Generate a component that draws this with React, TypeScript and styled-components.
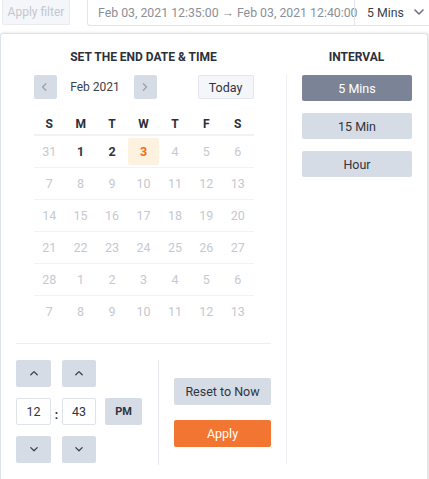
import styled, { createGlobalStyle } from 'styled-components';

const GlobalStyle = createGlobalStyle`
	html, body {
		margin: 0;
		padding: 0;
		background: #ffffff;
		font-family: Roboto, 'Noto Sans', Arial, sans-serif;
		overflow: hidden;
	}
	* {
		box-sizing: border-box;
	}
`;

const Page = styled.div`
	width: 429px;
	height: 479px;
	overflow: hidden;
`;

const TopBar = styled.div`
	display: flex;
	align-items: stretch;
	height: 26px;
`;

const FilterButton = styled.button`
	margin-left: 2px;
	width: 68px;
	height: 25px;
	padding: 0;
	background: #f4f6f9;
	border: 1px solid #e8ebf0;
	border-top: 0;
	border-radius: 0 0 2px 2px;
	color: #c3c7ce;
	font-family: inherit;
	font-size: 12px;
`;

const RangeBox = styled.div`
	margin-left: 17px;
	flex: 1;
	display: flex;
	align-items: center;
	height: 26px;
	border-left: 1px solid #e2e6ec;
	border-bottom: 1px solid #e2e6ec;
	border-radius: 0 0 0 3px;
`;

const RangeText = styled.span`
	padding-left: 10px;
	width: 266px;
	flex-shrink: 0;
	color: #8a8f99;
	font-size: 12.3px;
	white-space: nowrap;
`;

const IntervalSelect = styled.div`
	flex: 1;
	height: 100%;
	display: flex;
	align-items: center;
	gap: 10px;
	padding-left: 12px;
	border-left: 1px solid #e2e6ec;
	color: #3b404a;
	font-size: 12.3px;
`;

const Popup = styled.div`
	margin-top: 7px;
	width: 428px;
	height: 460px;
	border: 1px solid #dde2ea;
	border-bottom: 0;
	border-radius: 3px 3px 0 0;
	box-shadow: 1px 0 3px rgba(60, 70, 90, 0.18);
	display: grid;
	grid-template-columns: 285px 1fr;
	grid-template-rows: 41px auto;
`;

const Title = styled.h3`
	margin: 0;
	padding-top: 16px;
	text-align: center;
	font-size: 12px;
	font-weight: 700;
	color: #2b303a;
	line-height: 14px;
`;

const LeftPane = styled.div`
	padding: 0 15px;
`;

const Calendar = styled.div`
	width: 220px;
	margin: 0 auto;
`;

const NavRow = styled.div`
	display: flex;
	align-items: center;
	height: 24px;
`;

const NavButton = styled.button`
	width: 23px;
	height: 24px;
	padding: 0;
	border: 0;
	border-radius: 2px;
	background: #d6dce5;
	display: flex;
	align-items: center;
	justify-content: center;
`;

const MonthLabel = styled.span`
	width: 77px;
	text-align: center;
	font-size: 12px;
	color: #3b404a;
`;

const TodayButton = styled.button`
	margin-left: auto;
	width: 56px;
	height: 24px;
	padding: 0;
	background: #f4f6f9;
	border: 1px solid #e3e7ed;
	border-radius: 2px;
	font-family: inherit;
	font-size: 12.5px;
	color: #2f343d;
`;

const Week = styled.div<{ $head?: boolean }>`
	display: grid;
	grid-template-columns: repeat(7, 1fr);
	height: ${(p) => (p.$head ? '22px' : '32px')};
	margin-top: ${(p) => (p.$head ? '14px' : '0')};
	border-bottom: ${(p) => (p.$head ? '1px solid #f0f2f5' : '0')};
	& + & {
		border-top: 1px solid #f0f2f5;
	}
`;

const DayName = styled.span`
	display: flex;
	align-items: center;
	justify-content: center;
	font-size: 12px;
	font-weight: 700;
	color: #2b303a;
`;

const Day = styled.span<{ $tone: 'muted' | 'active' | 'selected' }>`
	margin: 2px 0;
	display: flex;
	align-items: center;
	justify-content: center;
	border-radius: 2px;
	font-size: 12.5px;
	font-weight: ${(p) => (p.$tone === 'muted' ? 400 : 700)};
	color: ${(p) =>
		p.$tone === 'muted' ? '#c5c9d0' : p.$tone === 'selected' ? '#f26c1f' : '#2f343d'};
	background: ${(p) => (p.$tone === 'selected' ? '#fdf2df' : 'transparent')};
`;

const Rule = styled.div`
	margin-top: 16px;
	height: 1px;
	background: #eceff3;
`;

const TimeRow = styled.div`
	margin-top: 16px;
	display: flex;
	height: 105px;
`;

const Spinner = styled.div`
	display: grid;
	grid-template-columns: 35px 11px 34px 9px 37px;
	grid-template-rows: 27px 27px 27px;
	row-gap: 11px;
	align-items: center;
	padding-right: 16px;
	border-right: 1px solid #e6e9ee;
`;

const StepButton = styled.button`
	height: 27px;
	padding: 0;
	border: 0;
	border-radius: 2px;
	background: #d6dce5;
	display: flex;
	align-items: center;
	justify-content: center;
`;

const TimeInput = styled.input`
	width: 100%;
	height: 27px;
	border: 1px solid #dfe3ea;
	border-radius: 2px;
	text-align: center;
	font-family: inherit;
	font-size: 12.5px;
	color: #2f343d;
	padding: 0;
	outline: none;
`;

const Colon = styled.span`
	text-align: center;
	font-size: 12px;
	font-weight: 700;
	color: #2f343d;
	padding-top: 6px;
`;

const MeridiemButton = styled.button`
	height: 27px;
	padding: 0;
	border: 0;
	border-radius: 2px;
	background: #d6dce5;
	font-family: inherit;
	font-size: 11px;
	font-weight: 700;
	color: #2f343d;
`;

const Actions = styled.div`
	flex: 1;
	padding-left: 15px;
	display: flex;
	flex-direction: column;
	justify-content: center;
	gap: 15px;
`;

const ActionButton = styled.button<{ $primary?: boolean }>`
	height: 27px;
	padding: 0;
	border: 0;
	border-radius: 2px;
	background: ${(p) => (p.$primary ? '#f27632' : '#d6dce5')};
	color: ${(p) => (p.$primary ? '#ffffff' : '#2f343d')};
	font-family: inherit;
	font-size: 12.5px;
`;

const IntervalPane = styled.div`
	height: 389px;
	border-left: 1px solid #eceff3;
	padding: 0 15px 0 15px;
	display: flex;
	flex-direction: column;
	gap: 12px;
`;

const IntervalButton = styled.button<{ $active?: boolean }>`
	height: 26px;
	padding: 0;
	border: 0;
	border-radius: 2px;
	background: ${(p) => (p.$active ? '#7b8497' : '#d6dce5')};
	color: ${(p) => (p.$active ? '#ffffff' : '#2f343d')};
	font-family: inherit;
	font-size: 12.5px;
`;

const Chevron = ({ dir, color = '#3b404a', size = 8 }: { dir: 'up' | 'down' | 'left' | 'right'; color?: string; size?: number }) => {
	const d = {
		up: 'M1 6 L5 2 L9 6',
		down: 'M1 2 L5 6 L9 2',
		left: 'M6 1 L2 5 L6 9',
		right: 'M3 1 L7 5 L3 9',
	}[dir];
	return (
		<svg width={size} height={size} viewBox="0 0 10 10" fill="none">
			<path d={d} stroke={color} strokeWidth={1.6} strokeLinecap="round" strokeLinejoin="round" />
		</svg>
	);
};

const weekdays = ['S', 'M', 'T', 'W', 'T', 'F', 'S'];

const weeks: number[][] = [
	[31, 1, 2, 3, 4, 5, 6],
	[7, 8, 9, 10, 11, 12, 13],
	[14, 15, 16, 17, 18, 19, 20],
	[21, 22, 23, 24, 25, 26, 27],
	[28, 1, 2, 3, 4, 5, 6],
	[7, 8, 9, 10, 11, 12, 13],
];

function toneOf(row: number, col: number): 'muted' | 'active' | 'selected' {
	if (row === 0 && col === 3) return 'selected';
	if (row === 0 && (col === 1 || col === 2)) return 'active';
	return 'muted';
}

export default function App() {
	return (
		<Page>
			<GlobalStyle />
			<TopBar>
				<FilterButton>Apply filter</FilterButton>
				<RangeBox>
					<RangeText>Feb 03, 2021 12:35:00 → Feb 03, 2021 12:40:00</RangeText>
					<IntervalSelect>
						5 Mins
						<Chevron dir="down" color="#6b7280" size={10} />
					</IntervalSelect>
				</RangeBox>
			</TopBar>
			<Popup>
				<Title>SET THE END DATE &amp; TIME</Title>
				<Title>INTERVAL</Title>
				<LeftPane>
					<Calendar>
						<NavRow>
							<NavButton>
								<Chevron dir="left" color="#9aa1ad" />
							</NavButton>
							<MonthLabel>Feb 2021</MonthLabel>
							<NavButton>
								<Chevron dir="right" color="#9aa1ad" />
							</NavButton>
							<TodayButton>Today</TodayButton>
						</NavRow>
						<Week $head>
							{weekdays.map((w, i) => (
								<DayName key={i}>{w}</DayName>
							))}
						</Week>
						{weeks.map((week, r) => (
							<Week key={r}>
								{week.map((d, c) => (
									<Day key={c} $tone={toneOf(r, c)}>
										{d}
									</Day>
								))}
							</Week>
						))}
					</Calendar>
					<Rule />
					<TimeRow>
						<Spinner>
							<StepButton>
								<Chevron dir="up" />
							</StepButton>
							<span />
							<StepButton>
								<Chevron dir="up" />
							</StepButton>
							<span />
							<span />
							<TimeInput defaultValue="12" />
							<Colon>:</Colon>
							<TimeInput defaultValue="43" />
							<span />
							<MeridiemButton>PM</MeridiemButton>
							<StepButton>
								<Chevron dir="down" />
							</StepButton>
							<span />
							<StepButton>
								<Chevron dir="down" />
							</StepButton>
							<span />
							<span />
						</Spinner>
						<Actions>
							<ActionButton>Reset to Now</ActionButton>
							<ActionButton $primary>Apply</ActionButton>
						</Actions>
					</TimeRow>
				</LeftPane>
				<IntervalPane>
					<IntervalButton $active>5 Mins</IntervalButton>
					<IntervalButton>15 Min</IntervalButton>
					<IntervalButton>Hour</IntervalButton>
				</IntervalPane>
			</Popup>
		</Page>
	);
}
